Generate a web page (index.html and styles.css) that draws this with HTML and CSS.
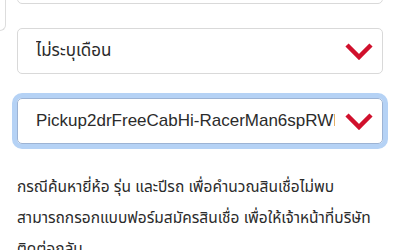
FILE: index.html
```html
<!DOCTYPE html>
<html lang="th">
<head>
    <meta charset="UTF-8">
    <meta name="viewport" content="width=device-width, initial-scale=1.0">
    <title>Car Loan</title>
    <link rel="stylesheet" href="styles.css">
</head>
<body>
    <div class="peek"></div>
    <form class="loan-form">
        <div class="select-box select-top"></div>

        <div class="select-box">
            <span class="select-text">ไม่ระบุเดือน</span>
            <svg class="chevron" viewBox="0 0 28 17"><path d="M2 2 L14 14 L26 2"/></svg>
        </div>

        <div class="select-box is-focused">
            <span class="select-text">Pickup2drFreeCabHi-RacerMan6spRWD</span>
            <svg class="chevron" viewBox="0 0 28 17"><path d="M2 2 L14 14 L26 2"/></svg>
        </div>
    </form>

    <p class="note">กรณีค้นหายี่ห้อ รุ่น และปีรถ เพื่อคำนวณสินเชื่อไม่พบ สามารถกรอกแบบฟอร์มสมัครสินเชื่อ เพื่อให้เจ้าหน้าที่บริษัทติดต่อกลับ</p>
</body>
</html>
```

FILE: styles.css
```css
body {
    margin: 0;
    padding: 0 17px;
    background: #fff;
    font-family: "Liberation Sans", "Noto Sans Thai", "Noto Sans", sans-serif;
    color: #2b2b2b;
    position: relative;
}
.peek {
    position: absolute;
    left: -10px;
    top: -10px;
    width: 15px;
    height: 40px;
    border-right: 1px solid #ddd;
    border-bottom: 1px solid #ddd;
    border-bottom-right-radius: 6px;
}
.loan-form {
    display: flex;
    flex-direction: column;
    gap: 24px;
    margin-top: -42px;
}
.select-box {
    height: 46px;
    box-sizing: border-box;
    border: 1px solid #d9d9d9;
    border-radius: 5px;
    display: flex;
    align-items: center;
    padding: 0 9px 0 18px;
    gap: 10px;
}
.select-text {
    flex: 1;
    font-size: 17px;
    white-space: nowrap;
    overflow: hidden;
}
.is-focused {
    border-color: #9cb3d4;
    box-shadow: 0 0 0 5px #b5d2f5;
}
.chevron {
    width: 28px;
    height: 17px;
    flex: none;
}
.chevron path {
    fill: none;
    stroke: #d0102c;
    stroke-width: 4.5;
}
.note {
    margin: 27px 0 0;
    font-size: 15.5px;
    line-height: 31px;
}
```
